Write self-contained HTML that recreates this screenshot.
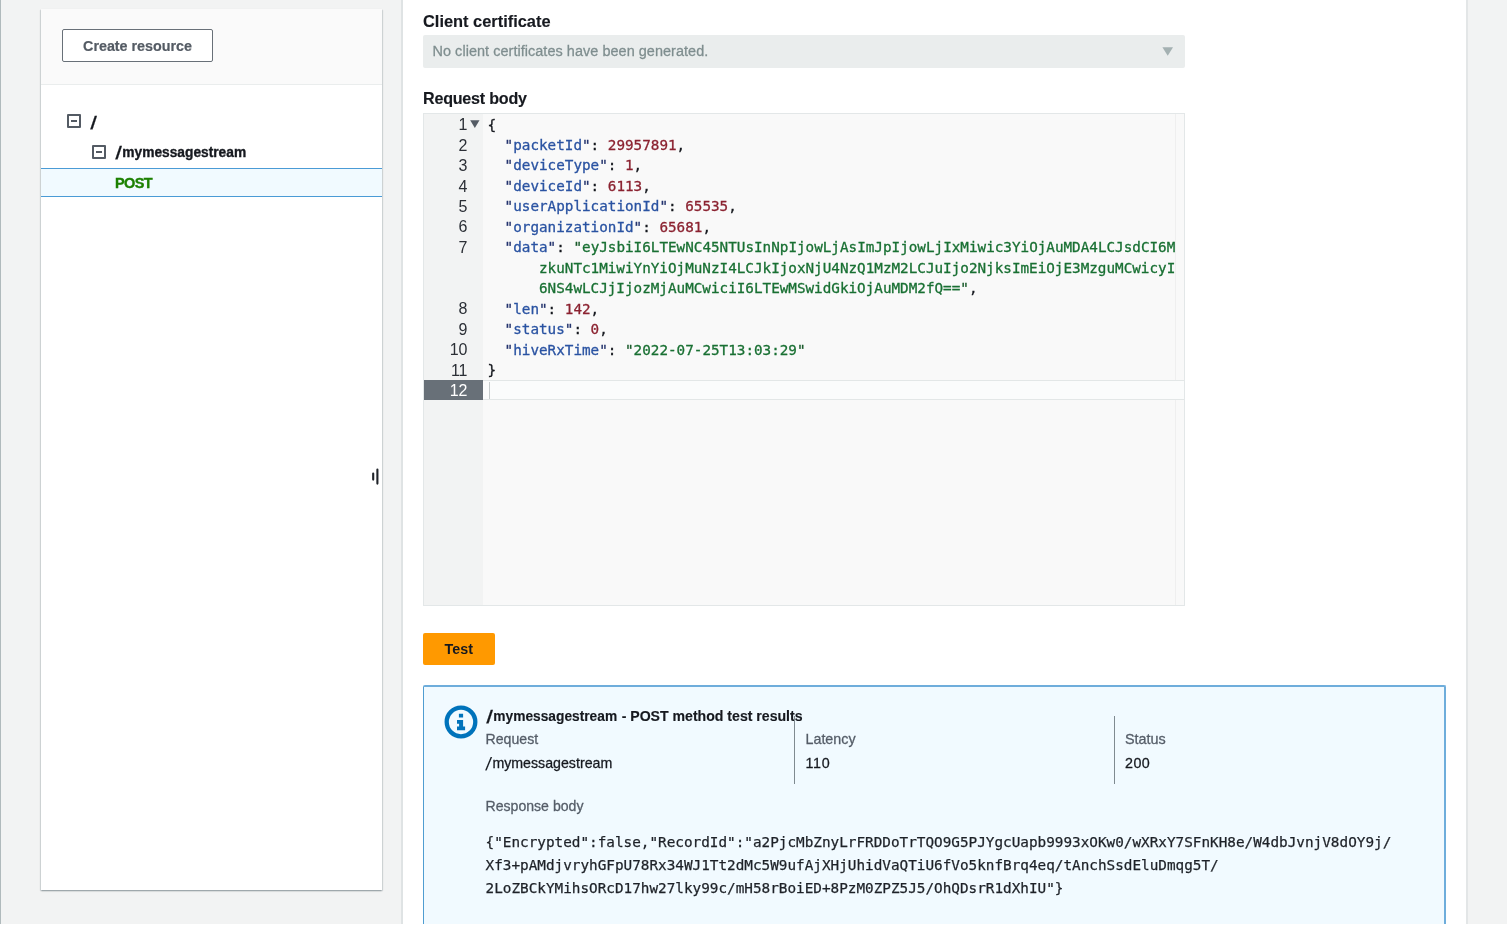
<!DOCTYPE html>
<html lang="en">
<head>
<meta charset="utf-8">
<title>API Gateway - Method Test</title>
<style>
*{box-sizing:border-box;margin:0;padding:0}
html,body{width:1509px;height:928px;overflow:hidden;background:#fff}
body{position:relative;font-family:"Liberation Sans",sans-serif;color:#16191f}
#app{will-change:transform;position:absolute;left:0;top:0;width:1507px;height:924px;background:#f2f3f3;overflow:hidden}
.abs{position:absolute}
.t{position:absolute;white-space:nowrap;line-height:20px;font-size:14.3px;-webkit-text-stroke:.28px}
.t.b{-webkit-text-stroke:.15px}
.b{font-weight:bold}.sl{display:inline-block;line-height:1;font-size:18px;position:relative;top:2.2px;transform:skewX(-8deg);transform-origin:50% 50%;margin-left:.9px;margin-right:1.4px;-webkit-text-stroke:.25px}
#edge{left:0;top:0;width:1.2px;height:924px;background:#b0babc}
#side{left:41px;top:9px;width:341px;height:881px;background:#fff;box-shadow:0 1px 1.5px 0 rgba(0,28,36,.3),1px 1px 1px 0 rgba(0,28,36,.08),-1px 1px 1px 0 rgba(0,28,36,.08)}
#sidehead{left:0;top:0;width:100%;height:76px;background:#fafafa;border-bottom:1px solid #eaeded}
#btn-create{left:21px;top:19.5px;width:151px;height:33px;border:1px solid #687078;padding-top:.8px;font-size:14.15px;-webkit-text-stroke:.2px #545b64;border-radius:2px;background:#fff;color:#545b64;font-weight:bold;font-size:14.3px;line-height:31px;text-align:center}
.box{position:absolute;width:14px;height:14px;border:2px solid #545b64;border-radius:1px;background:#fff}
.box:after{content:"";position:absolute;left:2px;top:4px;width:6px;height:2px;background:#545b64}
#sel{left:0;top:158.5px;width:100%;height:28.5px;background:#f1faff;border-top:1.2px solid #4a9bd6;border-bottom:1.2px solid #4a9bd6}
#main{left:401px;top:0;width:1067px;height:924px;background:#fff;border-left:2px solid #dfe3e4;border-right:2px solid #e3e6e7}
#select{left:423px;top:35px;width:762px;height:33px;background:#eaeded;border-radius:2px}
#editor{left:423px;top:113px;width:762px;height:493px;background:#f9f9f9;border:1px solid #e3e7e8;overflow:hidden}
#gutter{left:0;top:0;width:58.8px;height:100%;background:#f2f3f3}
#pm{left:751px;top:0;width:1px;height:100%;background:#efefef}
.ln{position:absolute;left:0;margin-top:1.2px;width:43.5px;text-align:right;font-size:16px;line-height:20.46px;height:20.46px;color:#2b2f36;white-space:nowrap}
.cl{position:absolute;left:63.4px;margin-top:.5px;font-family:"DejaVu Sans Mono","Liberation Mono",monospace;font-size:14.29px;line-height:20.46px;height:20.46px;white-space:pre;color:#16191f;-webkit-text-stroke:.3px}
.k{color:#2a53a2}.kq{color:#24346e}.sq{color:#185a2a}.n{color:#8b2230}.s{color:#197033}
#btn-test{left:423px;top:632.5px;width:71.5px;height:32.5px;background:#ff9900;border-radius:2px;color:#16191f;font-weight:bold;font-size:14.3px;line-height:32.5px;text-align:center}
#alert{left:423px;top:685px;width:1023px;height:260px;background:#f1faff;border-top:2px solid #6eaddb;border-left:1px solid #4f9dd1;border-right:2px solid #6eaddb;border-radius:2px}
.vd{position:absolute;width:1px;background:#7f8a90;top:715.5px;height:68px}
.mono{font-family:"DejaVu Sans Mono","Liberation Mono",monospace;font-size:14.345px;line-height:22.5px;-webkit-text-stroke:.25px;color:#1e2228}
.g{color:#555d68}
</style>
</head>
<body>
<div id="app">
  <div id="edge" class="abs"></div>

  <div id="side" class="abs">
    <div id="sidehead" class="abs"></div>
    <div class="abs" style="left:0;top:.5px;width:100%;height:880px">
    <div id="btn-create" class="abs">Create resource</div>
    <div class="box" style="left:26px;top:104.5px"></div>
    <div class="t b" id="t-root" style="left:49.6px;top:102.4px;font-size:14.3px"><span class="sl">/</span></div>
    <div class="box" style="left:50.6px;top:135px"></div>
    <div class="t b" id="t-res" style="left:74px;top:132.7px;font-size:13.75px;-webkit-text-stroke:.35px"><span class="sl">/</span>mymessagestream</div>
    <div id="sel" class="abs"></div>
    <div class="t b" id="t-post" style="left:73.9px;top:163.3px;color:#1d8102;letter-spacing:-.6px;-webkit-text-stroke:.35px;font-size:14.5px">POST</div>
    <svg class="abs" style="left:329px;top:456.5px" width="12" height="22" viewBox="0 0 12 22"><path d="M3.2 7.6v6M7.4 3.6v14" stroke="#1f2329" stroke-width="2.1" stroke-linecap="round" fill="none"/></svg>
    </div>
  </div>

  <div id="main" class="abs"></div>

  <div class="t b" id="t-cc" style="left:423px;top:11px;font-size:16.4px">Client certificate</div>
  <div id="select" class="abs">
    <div class="t" id="t-nocert" style="left:9.5px;top:6.1px;color:#7f8e8f;font-size:14.45px;letter-spacing:.05px">No client certificates have been generated.</div>
    <svg class="abs" style="left:739px;top:12px" width="12" height="9" viewBox="0 0 12 9"><path d="M0.4 0.2h10.6L5.7 8.8z" fill="#a4b1b2"/></svg>
  </div>
  <div class="t b" id="t-rb" style="left:423px;top:88.2px;font-size:16.1px;letter-spacing:-.22px">Request body</div>

  <div id="editor" class="abs">
    <div id="gutter" class="abs"></div>
    <div id="pm" class="abs"></div>
    <div class="abs" style="left:0;top:266px;width:58.8px;height:20px;background:#687078"></div>
    <div class="abs" style="left:58.8px;top:266px;width:702px;height:20px;background:#fbfcfc;border-top:1px solid #e3e7e7;border-bottom:1px solid #e3e7e7"></div>
    <div class="abs" style="left:65px;top:267.5px;width:1.3px;height:17px;background:#c6cbcc"></div>
    <svg class="abs" style="left:46.2px;top:5.9px" width="10" height="9" viewBox="0 0 10 9"><path d="M0.2 0.2h9.3L4.85 8z" fill="#545b64"/></svg>
    <div class="ln" style="top:0">1</div>
    <div class="ln" style="top:20.46px">2</div>
    <div class="ln" style="top:40.92px">3</div>
    <div class="ln" style="top:61.38px">4</div>
    <div class="ln" style="top:81.84px">5</div>
    <div class="ln" style="top:102.3px">6</div>
    <div class="ln" style="top:122.76px">7</div>
    <div class="ln" style="top:184.14px">8</div>
    <div class="ln" style="top:204.6px">9</div>
    <div class="ln" style="top:225.06px">10</div>
    <div class="ln" style="top:245.52px">11</div>
    <div class="ln" style="top:265.98px;color:#fff">12</div>
    <div class="cl" style="top:0">{</div>
    <div class="cl" style="top:20.46px">  <span class="k"><span class="kq">"</span>packetId<span class="kq">"</span></span>: <span class="n">29957891</span>,</div>
    <div class="cl" style="top:40.92px">  <span class="k"><span class="kq">"</span>deviceType<span class="kq">"</span></span>: <span class="n">1</span>,</div>
    <div class="cl" style="top:61.38px">  <span class="k"><span class="kq">"</span>deviceId<span class="kq">"</span></span>: <span class="n">6113</span>,</div>
    <div class="cl" style="top:81.84px">  <span class="k"><span class="kq">"</span>userApplicationId<span class="kq">"</span></span>: <span class="n">65535</span>,</div>
    <div class="cl" style="top:102.3px">  <span class="k"><span class="kq">"</span>organizationId<span class="kq">"</span></span>: <span class="n">65681</span>,</div>
    <div class="cl" style="top:122.76px">  <span class="k"><span class="kq">"</span>data<span class="kq">"</span></span>: <span class="s"><span class="sq">"</span>eyJsbiI6LTEwNC45NTUsInNpIjowLjAsImJpIjowLjIxMiwic3YiOjAuMDA4LCJsdCI6M</span></div>
    <div class="cl" style="top:143.22px">      <span class="s">zkuNTc1MiwiYnYiOjMuNzI4LCJkIjoxNjU4NzQ1MzM2LCJuIjo2NjksImEiOjE3MzguMCwicyI</span></div>
    <div class="cl" style="top:163.68px">      <span class="s">6NS4wLCJjIjozMjAuMCwiciI6LTEwMSwidGkiOjAuMDM2fQ==<span class="sq">"</span></span>,</div>
    <div class="cl" style="top:184.14px">  <span class="k"><span class="kq">"</span>len<span class="kq">"</span></span>: <span class="n">142</span>,</div>
    <div class="cl" style="top:204.6px">  <span class="k"><span class="kq">"</span>status<span class="kq">"</span></span>: <span class="n">0</span>,</div>
    <div class="cl" style="top:225.06px">  <span class="k"><span class="kq">"</span>hiveRxTime<span class="kq">"</span></span>: <span class="s"><span class="sq">"</span>2022-07-25T13:03:29<span class="sq">"</span></span></div>
    <div class="cl" style="top:245.52px">}</div>
  </div>

  <div id="btn-test" class="abs">Test</div>

  <div id="alert" class="abs"></div>
  <svg class="abs" style="left:444px;top:705.1px" width="34" height="34" viewBox="0 0 34 34"><circle cx="17" cy="17" r="14.3" fill="none" stroke="#0073bb" stroke-width="4.3"/><path d="M14.9 8.8h4.2v3.8h-4.2zM13 15h6.1v6.6h2v3.7H13v-3.7h2.1v-2.9H13z" fill="#0073bb"/></svg>
  <div class="t b" id="t-title" style="left:486px;top:705.6px;font-size:14.1px"><span class="sl">/</span><span style="font-size:13.75px">mymessagestream</span><span style="margin-left:.6px"> - POST method test results</span></div>
  <div class="t g" id="t-req" style="left:485.5px;top:728.6px;font-size:14.15px">Request</div>
  <div class="t" id="t-reqv" style="left:485.6px;top:753.3px;font-size:14.2px"><span class="sl" style="-webkit-text-stroke:.1px;margin-right:.9px">/</span>mymessagestream</div>
  <div class="vd" style="left:794px"></div>
  <div class="t g" id="t-lat" style="left:805.5px;top:728.6px">Latency</div>
  <div class="t" id="t-latv" style="left:805.5px;top:753px;letter-spacing:.7px">110</div>
  <div class="vd" style="left:1113.5px"></div>
  <div class="t g" id="t-st" style="left:1125px;top:728.6px;font-size:14.4px">Status</div>
  <div class="t" id="t-stv" style="left:1125px;top:753px;letter-spacing:.45px">200</div>
  <div class="t g" id="t-resp" style="left:485.5px;top:796px;font-size:14.1px">Response body</div>
  <div class="t mono" id="t-r1" style="left:485.5px;top:830.8px">{"Encrypted":false,"RecordId":"a2PjcMbZnyLrFRDDoTrTQO9G5PJYgcUapb9993xOKw0/wXRxY7SFnKH8e/W4dbJvnjV8dOY9j/</div>
  <div class="t mono" id="t-r2" style="left:485.5px;top:853.9px">Xf3+pAMdjvryhGFpU78Rx34WJ1Tt2dMc5W9ufAjXHjUhidVaQTiU6fVo5knfBrq4eq/tAnchSsdEluDmqg5T/</div>
  <div class="t mono" id="t-r3" style="left:485.5px;top:876.7px">2LoZBCkYMihsORcD17hw27lky99c/mH58rBoiED+8PzM0ZPZ5J5/OhQDsrR1dXhIU"}</div>
</div>
</body>
</html>
